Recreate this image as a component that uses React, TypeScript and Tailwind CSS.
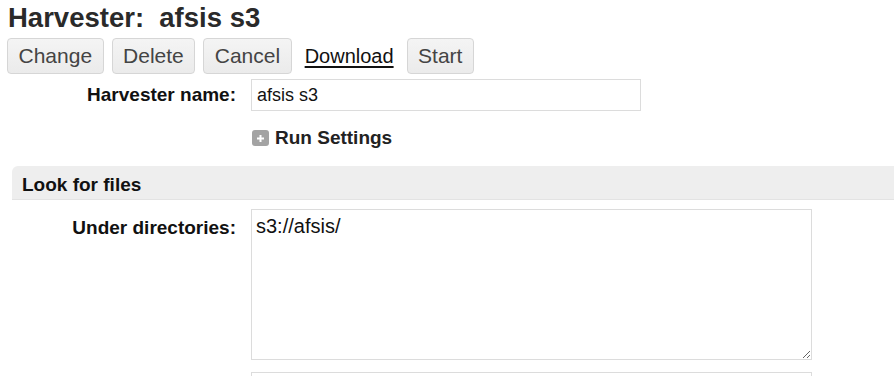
export default function App() {
  const font = { fontFamily: "'Liberation Sans', Arial, sans-serif" };

  return (
    <div className="w-[894px] h-[376px] overflow-hidden bg-white text-[#222]" style={font}>
      {/* title */}
      <h1 className="pl-[8px] h-[36px] leading-[36px] text-[27.5px] font-bold text-[#2a2a2a] whitespace-pre">
        Harvester:  afsis s3
      </h1>

      {/* action buttons */}
      <div className="flex items-center gap-[8px] pl-[7px] h-[37px] mt-[1px]">
        <Btn label="Change" />
        <Btn label="Delete" />
        <Btn label="Cancel" />
        <a className="text-[20px] text-[#111] underline underline-offset-[3px] px-[5px]" href="#">
          Download
        </a>
        <Btn label="Start" />
      </div>

      {/* name */}
      <div className="flex items-center mt-[5px]">
        <label className="w-[236px] text-right text-[19px] font-bold text-[#111]">Harvester name:</label>
        <input
          readOnly
          value="afsis s3"
          className="ml-[15px] w-[390px] h-[32px] border border-[#dcdcdc] px-[5px] text-[18px] text-[#111] outline-none"
        />
      </div>

      {/* run settings */}
      <div className="flex items-center ml-[252px] mt-[18px] h-[18px]">
        <span className="w-[17px] h-[16px] rounded-[3px] bg-[#a3a3a3] flex items-center justify-center">
          <svg width="9" height="9" viewBox="0 0 9 9">
            <path d="M4.5 1v7M1 4.5h7" stroke="#fff" strokeWidth="2" />
          </svg>
        </span>
        <span className="ml-[6px] text-[19px] font-bold text-[#222]">Run Settings</span>
      </div>

      {/* section */}
      <div className="ml-[12px] mt-[19px] h-[34px] bg-[#eeeeee] rounded-tl-[6px] border-b border-[#e3e3e3] flex items-center pl-[10px] pt-[6px]">
        <span className="text-[19px] font-bold text-[#111]">Look for files</span>
      </div>

      <div className="flex items-start mt-[9px]">
        <label className="w-[236px] text-right text-[19px] font-bold text-[#111] pt-[5px]">Under directories:</label>
        <textarea
          readOnly
          value="s3://afsis/"
          className="ml-[15px] w-[561px] h-[151px] border border-[#dcdcdc] px-[4px] pt-[4px] text-[20px] leading-[24px] text-[#111] outline-none resize"
        />
      </div>

      <div className="ml-[251px] mt-[12px] w-[561px] h-[32px] border border-[#dcdcdc]" />
    </div>
  );
}

function Btn({ label }: { label: string }) {
  return (
    <button className="h-[36px] px-[10.5px] rounded-[4px] border border-[#d6d6d6] bg-gradient-to-b from-[#f4f4f4] to-[#ebebeb] text-[21px] text-[#444]">
      {label}
    </button>
  );
}
